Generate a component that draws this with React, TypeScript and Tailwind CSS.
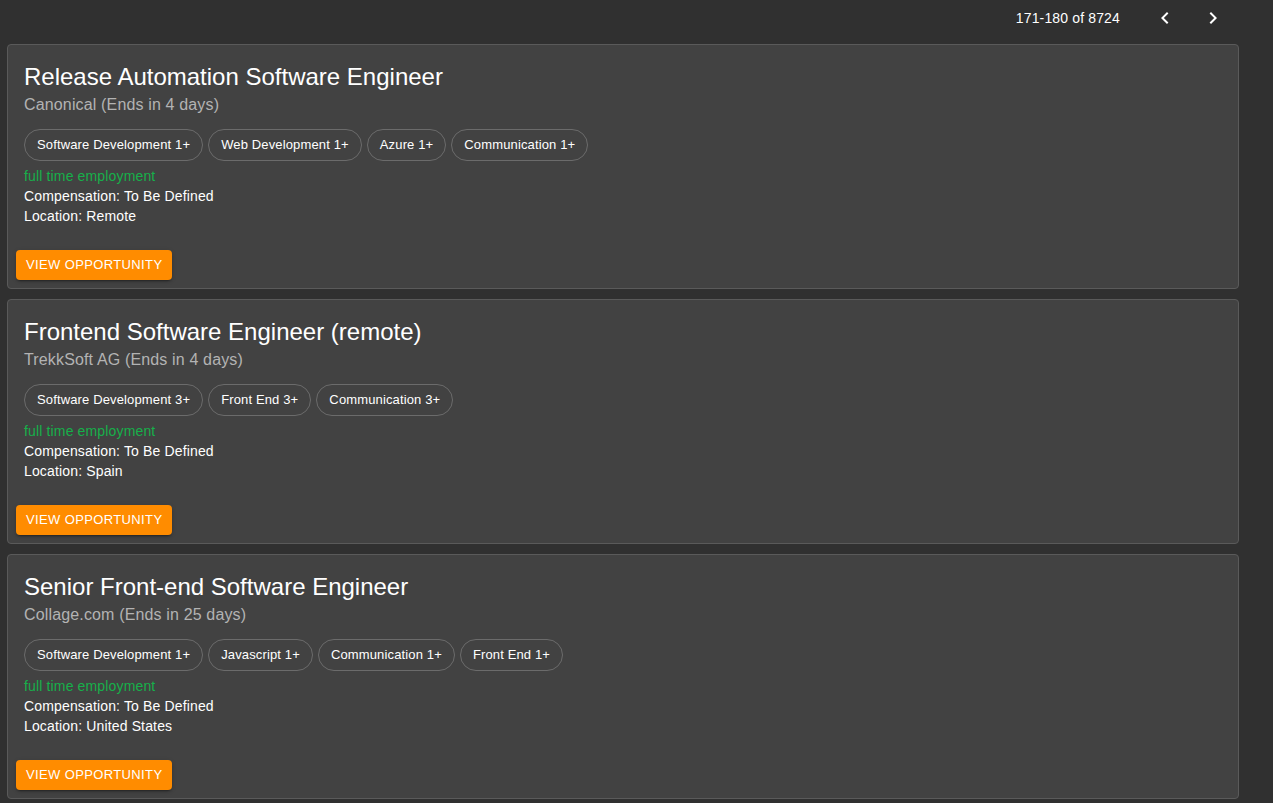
import React from "react";

type Job = {
  title: string;
  company: string;
  chips: string[];
  location: string;
};

const jobs: Job[] = [
  {
    title: "Release Automation Software Engineer",
    company: "Canonical (Ends in 4 days)",
    chips: ["Software Development 1+", "Web Development 1+", "Azure 1+", "Communication 1+"],
    location: "Remote",
  },
  {
    title: "Frontend Software Engineer (remote)",
    company: "TrekkSoft AG (Ends in 4 days)",
    chips: ["Software Development 3+", "Front End 3+", "Communication 3+"],
    location: "Spain",
  },
  {
    title: "Senior Front-end Software Engineer",
    company: "Collage.com (Ends in 25 days)",
    chips: ["Software Development 1+", "Javascript 1+", "Communication 1+", "Front End 1+"],
    location: "United States",
  },
];

function JobCard({ job }: { job: Job }) {
  return (
    <div className="ml-[7px] w-[1232px] rounded-[4px] border border-[#5a5a5a] bg-[#424242] text-white">
      <div className="px-4 pt-4 pb-4">
        <div className="text-[24px] leading-[32px] text-white">{job.title}</div>
        <div className="text-[16px] leading-[24px] tracking-[0.00938em] text-[#b3b3b3]">{job.company}</div>
        <div className="mt-[12px] flex flex-wrap gap-[5px]">
          {job.chips.map((c) => (
            <div
              key={c}
              className="flex h-[32px] items-center rounded-full border border-[#6b6b6b] px-[12px] text-[13px] tracking-[0.01071em] text-white"
            >
              {c}
            </div>
          ))}
        </div>
        <div className="mt-[5px] text-[14px] leading-[20px] tracking-[0.01071em]">
          <div className="text-[#16b04a]">full time employment</div>
          <div>Compensation: To Be Defined</div>
          <div>Location: {job.location}</div>
        </div>
      </div>
      <div className="p-2">
        <button className="flex h-[30px] items-center rounded-[4px] bg-[#ff8c00] px-[10px] text-[13px] uppercase tracking-[0.02857em] text-white shadow-[0_3px_1px_-2px_rgba(0,0,0,0.2),0_2px_2px_0_rgba(0,0,0,0.14),0_1px_5px_0_rgba(0,0,0,0.12)]">
          View Opportunity
        </button>
      </div>
    </div>
  );
}

export default function App() {
  return (
    <div
      className="h-[803px] w-full overflow-hidden bg-[#303030]"
      style={{ fontFamily: "'Liberation Sans', Arial, sans-serif" }}
    >
      <div className="flex h-[36px] items-center justify-end pr-[36px] text-white">
        <div className="text-[14px] tracking-[0.01071em]">171-180 of 8724</div>
        <div className="ml-[21px] flex">
          <button className="flex h-[36px] w-[48px] items-center justify-center">
            <svg width="24" height="24" viewBox="0 0 24 24" fill="currentColor">
              <path d="M15.41 16.59L10.83 12l4.58-4.59L14 6l-6 6 6 6 1.41-1.41z" />
            </svg>
          </button>
          <button className="flex h-[36px] w-[48px] items-center justify-center">
            <svg width="24" height="24" viewBox="0 0 24 24" fill="currentColor">
              <path d="M8.59 16.59L13.17 12 8.59 7.41 10 6l6 6-6 6-1.41-1.41z" />
            </svg>
          </button>
        </div>
      </div>
      <div className="mt-[8px] flex flex-col gap-[10px]">
        {jobs.map((j) => (
          <JobCard key={j.title} job={j} />
        ))}
      </div>
    </div>
  );
}
